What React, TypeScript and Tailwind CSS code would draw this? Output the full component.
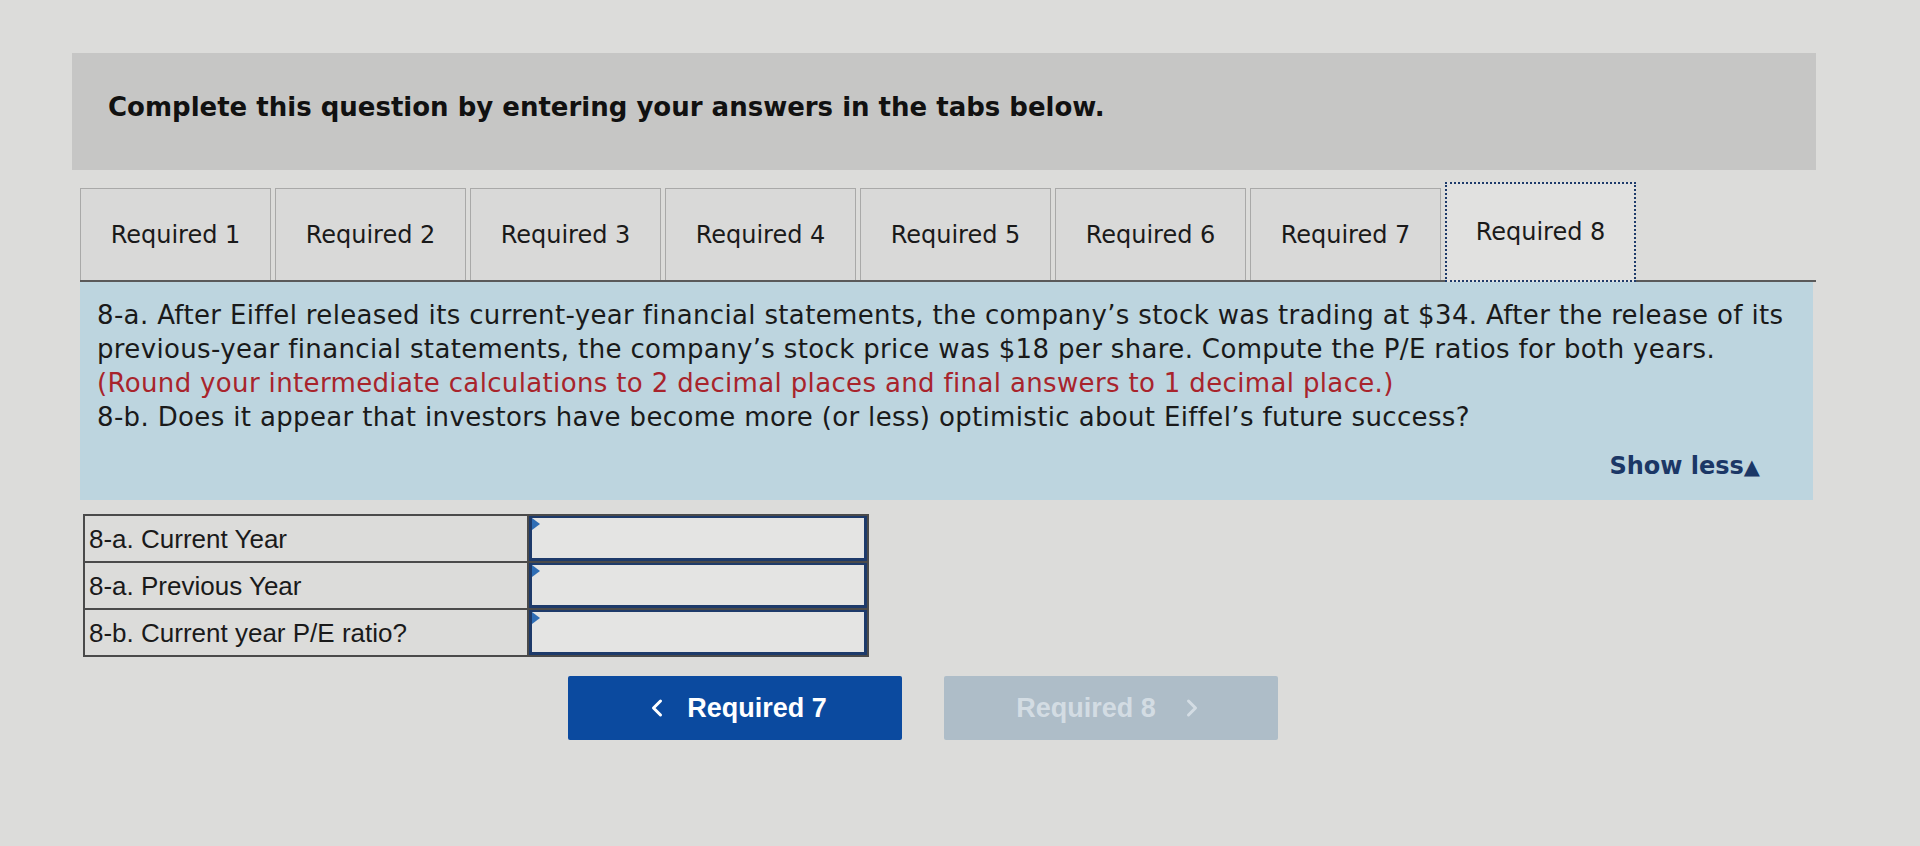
import { ChevronLeft, ChevronRight } from "lucide-react"

const TABS = [1, 2, 3, 4, 5, 6, 7, 8]

const ROWS = ["8-a. Current Year", "8-a. Previous Year", "8-b. Current year P/E ratio?"]

const VERDANA = "font-['DejaVu_Sans',Verdana,sans-serif]"
const ARIAL = "font-['Liberation_Sans',Arial,sans-serif]"

function InputCell() {
  // navy framed entry box with the little flag in the corner
  return (
    <div className="relative h-full border-[3px] border-t-2 border-[#1d3a6a] bg-[#e4e4e3]">
      <span className="absolute left-0 top-0 h-0 w-0 border-y-[6px] border-l-[8px] border-y-transparent border-l-[#2f6db5]" />
    </div>
  )
}

export default function App() {
  return (
    <div className="h-[846px] w-full overflow-hidden bg-[#dcdcda] pl-[72px] pr-[104px] pt-[53px] text-[#1a1a1a]">
      {/* prompt bar */}
      <div className="h-[117px] bg-[#c6c6c5] pl-[36px] pt-[35px]">
        <p className={`${VERDANA} text-[26px] font-bold text-[#111]`}>
          Complete this question by entering your answers in the tabs below.
        </p>
      </div>

      {/* tab strip */}
      <div className="ml-2 mt-[12px] flex items-end border-b-2 border-[#5a5a5a]">
        {TABS.map((n) => {
          const active = n === 8
          return (
            <div
              key={n}
              className={`mr-[4px] flex w-[191px] items-center justify-center ${VERDANA} text-[24px] ${
                active
                  ? "-mb-[2px] h-[100px] border-2 border-dotted border-[#1d3a6a] bg-[#e1e1e0]"
                  : "h-[92px] border border-b-0 border-[#a9a9a8] bg-[#d9d9d8]"
              }`}
            >
              Required {n}
            </div>
          )
        })}
        <div className="flex-1" />
      </div>

      {/* question panel */}
      <div className={`ml-2 mr-[3px] h-[218px] bg-[#bdd5df] pl-[17px] pr-[20px] pt-[16px] ${VERDANA} text-[26px] leading-[34px] tracking-[0.35px]`}>
        <p className="whitespace-nowrap">
          8-a. After Eiffel released its current-year financial statements, the company’s stock was trading at $34. After the release of its
          <br />
          previous-year financial statements, the company’s stock price was $18 per share. Compute the P/E ratios for both years.
          <br />
          <span className="text-[#a8242c]">
            (Round your intermediate calculations to 2 decimal places and final answers to 1 decimal place.)
          </span>
          <br />
          8-b. Does it appear that investors have become more (or less) optimistic about Eiffel’s future success?
        </p>
        <div className="mt-[15px] flex justify-end pr-[33px]">
          <span className="text-[24px] font-bold tracking-normal text-[#1b3766]">
            Show less<span className="text-[21px]">▲</span>
          </span>
        </div>
      </div>

      {/* answer table */}
      <table className={`ml-[11px] mt-[14px] w-[786px] border-collapse ${ARIAL} text-[26px]`}>
        <tbody>
          {ROWS.map((label) => (
            <tr key={label} className="h-[47px]">
              <td className="w-[444px] border-2 border-[#4a4a4a] px-[4px] leading-none text-[#1a1a1a]">{label}</td>
              <td className="h-[47px] border-2 border-[#4a4a4a] p-0">
                <InputCell />
              </td>
            </tr>
          ))}
        </tbody>
      </table>

      {/* prev / next */}
      <div className={`ml-[496px] mt-[19px] flex gap-[42px] ${ARIAL} text-[27px] font-bold`}>
        <button className="flex h-[64px] w-[334px] items-center justify-center gap-[16px] rounded-[2px] bg-[#0b4a9f] text-white">
          <ChevronLeft className="h-7 w-7" strokeWidth={2.6} />
          <span>Required 7</span>
        </button>
        <button className="flex h-[64px] w-[334px] items-center justify-center gap-[22px] rounded-[2px] bg-[#aebdc8] text-[#d3dce3]">
          <span>Required 8</span>
          <ChevronRight className="h-7 w-7" strokeWidth={2.6} />
        </button>
      </div>
    </div>
  )
}
